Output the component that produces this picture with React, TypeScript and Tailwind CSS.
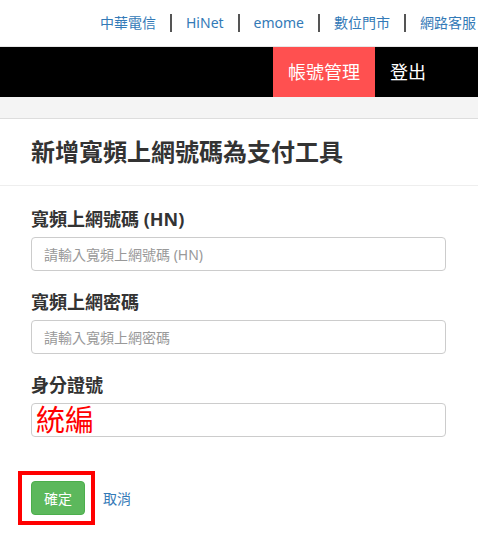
import React from "react";

const font = { fontFamily: '"Noto Sans", "Noto Sans CJK TC", sans-serif' };

const topLinks = ["中華電信", "HiNet", "emome", "數位門市", "網路客服"];

function TopBar() {
  return (
    <div className="h-[47px] border-b border-[#e7e7e7] flex items-center pl-[100px] overflow-hidden whitespace-nowrap">
      {topLinks.map((t, i) => (
        <React.Fragment key={t}>
          {i > 0 && <span className="w-[2px] h-[18px] bg-[#555] mx-[14px] shrink-0" />}
          <a className="text-[14px] text-[#337ab7] shrink-0 leading-5">{t}</a>
        </React.Fragment>
      ))}
    </div>
  );
}

function NavBar() {
  return (
    <div className="h-[50px] bg-black flex justify-end pr-[37px]">
      <div className="bg-[#ff5050] text-white text-[18px] flex items-center px-[15px]">帳號管理</div>
      <div className="text-white text-[18px] flex items-center px-[15px]">登出</div>
    </div>
  );
}

function Field({ label, placeholder, value }: { label: string; placeholder?: string; value?: string }) {
  return (
    <div className="mb-[20px]">
      <div className="text-[18px] font-bold text-[#333] leading-[22px] mb-[7px]">{label}</div>
      {value ? (
        <div className="h-[34px] border border-[#ccc] rounded-[4px] px-[4px] flex items-center">
          <span className="text-[29px] leading-[30px] text-[#ff0000]">{value}</span>
        </div>
      ) : (
        <input
          className="block w-full h-[34px] border border-[#ccc] rounded-[4px] px-[12px] text-[14px] text-[#555] placeholder:text-[#999] outline-none"
          placeholder={placeholder}
          style={font}
        />
      )}
    </div>
  );
}

export default function App() {
  return (
    <div className="w-[478px] h-[548px] bg-white overflow-hidden" style={font}>
      <TopBar />
      <NavBar />
      <div className="h-[22px] bg-[#f4f4f4] border-b border-[#ddd]" />
      <div className="px-[31px] py-[20px] border-b border-[#eee]">
        <h1 className="text-[24px] font-semibold text-[#333] leading-[26px]">新增寬頻上網號碼為支付工具</h1>
      </div>
      <div className="pl-[31px] pr-[32px] pt-[22px]">
        <Field label="寬頻上網號碼 (HN)" placeholder="請輸入寬頻上網號碼 (HN)" />
        <Field label="寬頻上網密碼" placeholder="請輸入寬頻上網密碼" />
        <Field label="身分證號" value="統編" />
        <div className="flex items-center pt-[24px]">
          <div className="relative">
            <button className="h-[34px] px-[12px] bg-[#5cb85c] border border-[#4cae4c] rounded-[4px] text-white text-[14px]">確定</button>
            <div className="absolute -left-[13px] -top-[10px] w-[77px] h-[54px] border-[4px] border-[#ff0000]" />
          </div>
          <a className="ml-[18px] text-[14px] text-[#337ab7]">取消</a>
        </div>
      </div>
    </div>
  );
}
